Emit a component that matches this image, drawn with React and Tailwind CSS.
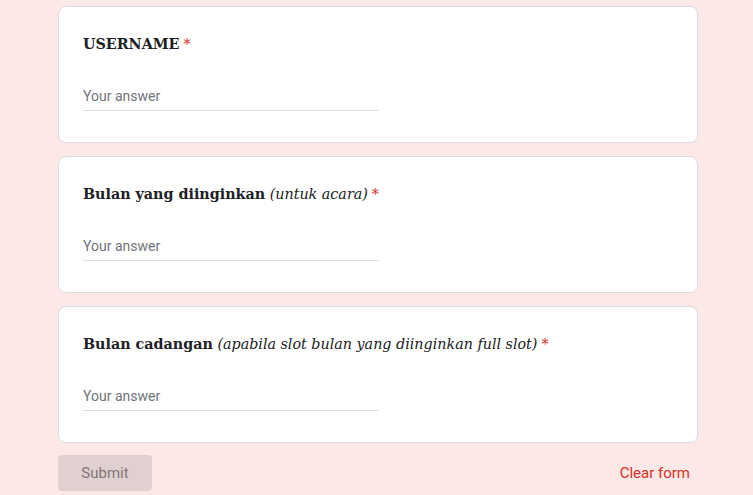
const questions = [
  { title: "USERNAME", note: null },
  { title: "Bulan yang diinginkan", note: "(untuk acara)" },
  { title: "Bulan cadangan", note: "(apabila slot bulan yang diinginkan full slot)" },
];

function Question({ title, note }) {
  return (
    <div className="h-[137px] rounded-lg border border-[#dadce0] bg-white px-6 pt-[28px]">
      <div className="font-['DejaVu_Serif',serif] text-[14.3px] leading-[18px] text-[#202124]">
        <span className="font-bold">{title}</span>
        {note && <span className="italic"> {note}</span>}
        <span className="ml-1 text-[#d93025]">*</span>
      </div>
      <div className="mt-[35px] w-[296px] border-b border-[#e0e0e0] pb-[6px] font-['Roboto',sans-serif] text-[14px] leading-[16px] text-[#70757a]">
        Your answer
      </div>
    </div>
  );
}

export default function App() {
  return (
    <div className="min-h-[495px] bg-[#fce8e6] pt-[6px]">
      <div className="ml-[58px] flex w-[640px] flex-col gap-[13px]">
        {questions.map((q) => (
          <Question key={q.title} {...q} />
        ))}
      </div>
      <div className="ml-[58px] mt-[12px] flex w-[640px] items-center justify-between">
        <button className="h-[36px] w-[94px] rounded bg-[#e0d0d0] font-['Roboto',sans-serif] text-[15px] text-[#80767a]">
          Submit
        </button>
        <span className="mr-2 font-['Roboto',sans-serif] text-[15px] text-[#d93025]">
          Clear form
        </span>
      </div>
    </div>
  );
}
